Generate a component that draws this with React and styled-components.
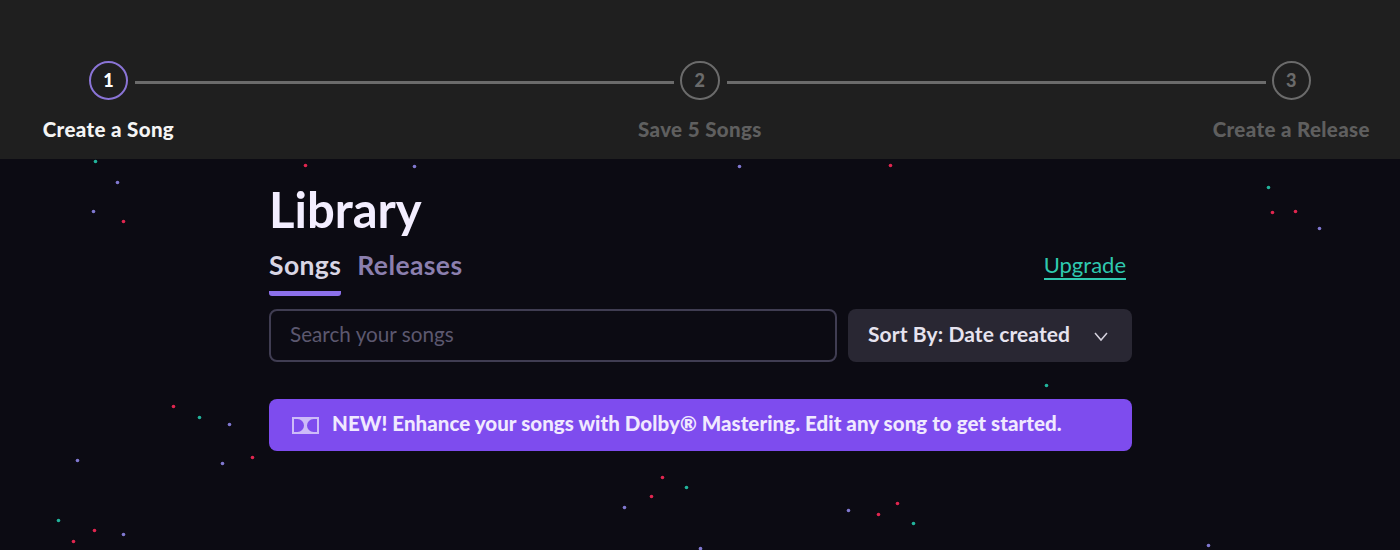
import React from 'react';
import styled, { createGlobalStyle } from 'styled-components';

const GlobalStyle = createGlobalStyle`
  html, body {
    margin: 0;
    padding: 0;
    height: 100%;
    background: #0c0b13;
    font-family: 'Lato', 'Open Sans', sans-serif;
  }
  * {
    box-sizing: border-box;
  }
`;

const Page = styled.div`
  position: relative;
  width: 1400px;
  height: 550px;
  overflow: hidden;
  background: #0c0b13;
`;

const StarField = styled.svg`
  position: absolute;
  top: 0;
  left: 0;
`;

const Stepper = styled.header`
  position: relative;
  display: flex;
  align-items: flex-start;
  height: 159px;
  padding: 60.5px 89px 0 88.7px;
  background: #1f1f1f;
`;

const Step = styled.div`
  display: flex;
  flex-direction: column;
  align-items: center;
  width: 39.5px;
`;

const Circle = styled.div`
  display: flex;
  align-items: center;
  justify-content: center;
  width: 39.5px;
  height: 39.5px;
  border: 2.5px solid ${(p) => (p.$active ? '#8a74d6' : '#6b6b6b')};
  border-radius: 50%;
  color: ${(p) => (p.$active ? '#ffffff' : '#6b6b6b')};
  font-size: 18px;
  font-weight: 900;
`;

const StepLabel = styled.div`
  margin-top: 17px;
  color: ${(p) => (p.$active ? '#f4f4f4' : '#5f5f5f')};
  font-size: 20.5px;
  line-height: 24px;
  letter-spacing: 0.35px;
  font-weight: 900;
  white-space: nowrap;
`;

const Connector = styled.div`
  flex: 1;
  height: 3px;
  margin: 20.5px 6px 0 7px;
  background: #6b6b6b;
`;

const Content = styled.main`
  position: relative;
  width: 863px;
  margin-left: 269px;
  padding-top: 21px;
`;

const Title = styled.h1`
  margin: 0;
  color: #f3eeff;
  font-size: 49px;
  line-height: 58px;
  font-weight: 700;
`;

const TabRow = styled.div`
  display: flex;
  align-items: flex-start;
  justify-content: space-between;
  margin-top: 13px;
  padding-right: 6px;
`;

const Tabs = styled.nav`
  display: flex;
  gap: 16px;
`;

const Tab = styled.div`
  padding-bottom: 12px;
  border-bottom: 5px solid ${(p) => (p.$active ? '#8c70ea' : 'transparent')};
  border-radius: 0 0 3px 3px;
  color: ${(p) => (p.$active ? '#d9d6e4' : '#8b7fae')};
  font-size: 26.5px;
  line-height: 28px;
  letter-spacing: 0.4px;
  font-weight: 700;
`;

const UpgradeLink = styled.a`
  margin-top: 2px;
  padding-bottom: 1px;
  border-bottom: 2px solid #2fc9b0;
  color: #2fc9b0;
  font-size: 22px;
  line-height: 24px;
`;

const Filters = styled.div`
  display: flex;
  gap: 11px;
  margin-top: 13px;
`;

const SearchBox = styled.div`
  flex: 1;
  display: flex;
  align-items: center;
  height: 53px;
  padding: 0 19px 3px;
  border: 2px solid #403d52;
  border-radius: 8px;
  color: #5c586f;
  font-size: 20.7px;
`;

const SortButton = styled.div`
  display: flex;
  align-items: center;
  justify-content: space-between;
  width: 284px;
  height: 53px;
  padding: 0 23px 0 20px;
  border-radius: 8px;
  background: #292733;
  color: #e6e3ef;
  font-size: 21px;
  letter-spacing: 0.1px;
  font-weight: 700;
`;

const SortText = styled.span`
  margin-top: -5px;
`;

const Banner = styled.div`
  display: flex;
  align-items: center;
  gap: 13px;
  height: 52px;
  margin-top: 37px;
  padding: 0 23px;
  border-radius: 8px;
  background: #7e4cee;
  color: #f0e9ff;
  font-size: 20.5px;
  letter-spacing: 0.05px;
  font-weight: 900;
`;

const BannerText = styled.span`
  margin-top: -4px;
`;

const stars = [
  ['#22b39b', [[95, 161], [1268, 187], [1046, 385], [199, 417], [686, 487], [58, 520], [913, 523]]],
  ['#e0264f', [[305, 165], [890, 165], [123, 221], [1272, 212], [1295, 211], [173, 406], [252, 457], [662, 477], [651, 496], [897, 503], [878, 514], [94, 530], [73, 541]]],
  ['#8078d0', [[414, 166], [739, 166], [117, 182], [93, 211], [1319, 228], [229, 424], [77, 460], [222, 463], [624, 507], [848, 510], [123, 534], [700, 548], [1208, 545]]],
];

const steps = ['Create a Song', 'Save 5 Songs', 'Create a Release'];

const DolbyIcon = () => (
  <svg width="27" height="17" viewBox="0 0 27 17">
    <path
      fill="#cdbbf8"
      fillRule="evenodd"
      d="M0 0h27v17H0zM2 2v13h3.5a6.5 6.5 0 0 0 0-13zM25 2h-3.5a6.5 6.5 0 0 0 0 13h3.5z"
    />
  </svg>
);

const Chevron = () => (
  <svg width="16" height="16" viewBox="0 0 16 16" fill="none" stroke="#d5d2de" strokeWidth="1.5">
    <path d="M2 5l6 7 6-7" />
  </svg>
);

const App = () => (
  <Page>
    <GlobalStyle />
    <StarField width="1400" height="550">
      {stars.map(([color, points]) =>
        points.map(([x, y]) => (
          <circle key={`${x}-${y}`} cx={x + 0.5} cy={y + 0.5} r="1.8" fill={color} />
        ))
      )}
    </StarField>
    <Stepper>
      {steps.map((label, i) => (
        <React.Fragment key={label}>
          {i > 0 && <Connector />}
          <Step>
            <Circle $active={i === 0}>{i + 1}</Circle>
            <StepLabel $active={i === 0}>{label}</StepLabel>
          </Step>
        </React.Fragment>
      ))}
    </Stepper>
    <Content>
      <Title>Library</Title>
      <TabRow>
        <Tabs>
          <Tab $active>Songs</Tab>
          <Tab>Releases</Tab>
        </Tabs>
        <UpgradeLink>Upgrade</UpgradeLink>
      </TabRow>
      <Filters>
        <SearchBox>Search your songs</SearchBox>
        <SortButton>
          <SortText>Sort By: Date created</SortText>
          <Chevron />
        </SortButton>
      </Filters>
      <Banner>
        <DolbyIcon />
        <BannerText>NEW! Enhance your songs with Dolby® Mastering. Edit any song to get started.</BannerText>
      </Banner>
    </Content>
  </Page>
);

export default App;
